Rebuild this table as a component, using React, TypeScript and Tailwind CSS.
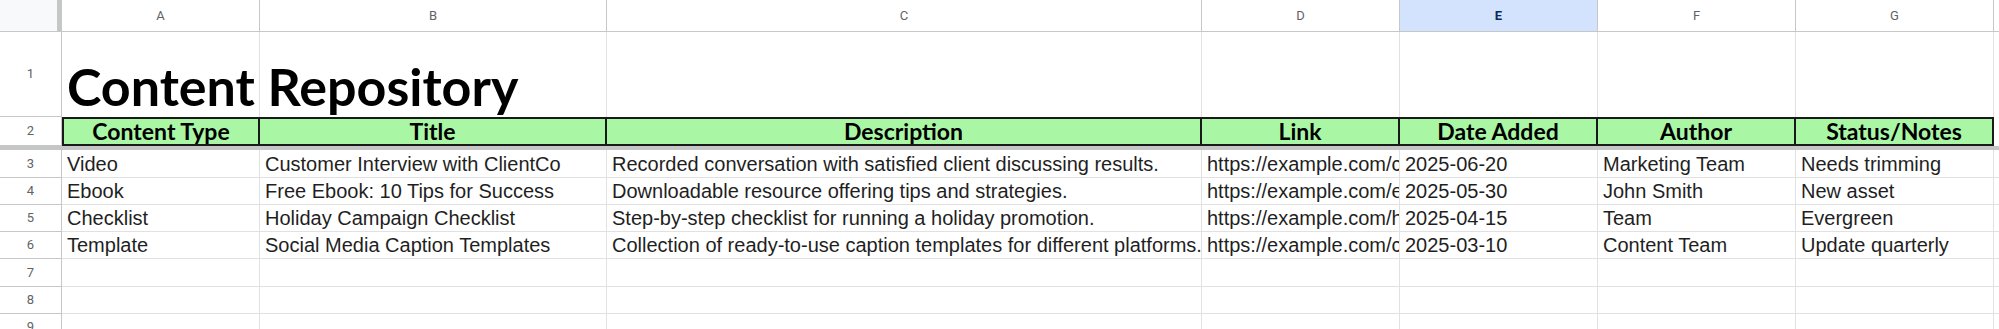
import React from 'react';

const cols = ['A', 'B', 'C', 'D', 'E', 'F', 'G'];
const widths = ['w-[198px]', 'w-[347px]', 'w-[595px]', 'w-[198px]', 'w-[198px]', 'w-[198px]', 'w-[198px]'];

const headers = ['Content Type', 'Title', 'Description', 'Link', 'Date Added', 'Author', 'Status/Notes'];

const rows = [
  ['Video', 'Customer Interview with ClientCo', 'Recorded conversation with satisfied client discussing results.', 'https://example.com/client-interview', '2025-06-20', 'Marketing Team', 'Needs trimming'],
  ['Ebook', 'Free Ebook: 10 Tips for Success', 'Downloadable resource offering tips and strategies.', 'https://example.com/ebook-tips', '2025-05-30', 'John Smith', 'New asset'],
  ['Checklist', 'Holiday Campaign Checklist', 'Step-by-step checklist for running a holiday promotion.', 'https://example.com/holiday-checklist', '2025-04-15', 'Team', 'Evergreen'],
  ['Template', 'Social Media Caption Templates', 'Collection of ready-to-use caption templates for different platforms.', 'https://example.com/caption-templates', '2025-03-10', 'Content Team', 'Update quarterly'],
];

const heights = ['h-[28px]', 'h-[27px]', 'h-[27px]', 'h-[27px]', 'h-[28px]', 'h-[27px]', 'h-[27px]'];

const RowNum = ({ n, h }: { n: number; h: string }) => (
  <div className={`${h} w-[62px] shrink-0 flex items-center justify-center border-r border-b border-[#c7c7c7] text-[13px] text-[#5f6368] font-['Roboto',sans-serif] bg-white`}>
    {n}
  </div>
);

export default function App() {
  return (
    <div className="w-[1999px] h-[329px] overflow-hidden bg-white font-['Liberation_Sans',Arial,sans-serif] text-[#1f1f1f]">
      {/* column letters */}
      <div className="flex h-[32px]">
        <div className="w-[62px] shrink-0 flex border-b border-[#c7c7c7] bg-[#f8f9fa]">
          <div className="flex-1" />
          <div className="w-[5px] bg-[#c4c7c5]" />
        </div>
        {cols.map((c, i) => (
          <div
            key={c}
            className={`${widths[i]} shrink-0 flex items-center justify-center border-r border-b border-[#c7c7c7] text-[13px] font-['Roboto',sans-serif] ${
              c === 'E' ? 'bg-[#d3e3fd] text-[#0b2a57] font-bold' : 'bg-white text-[#5f6368]'
            }`}
          >
            {c}
          </div>
        ))}
        <div className="flex-1 border-b border-[#c7c7c7] bg-white" />
      </div>

      {/* row 1: title */}
      <div className="flex h-[85px]">
        <RowNum n={1} h="h-[85px]" />
        <div className="relative w-[198px] shrink-0 flex items-end border-r border-[#e1e1e1] overflow-visible">
          <span className="relative z-10 pl-[5px] pb-[5px] whitespace-nowrap font-['Lato',sans-serif] font-bold text-[52px] leading-none text-black">
            Content Repository
          </span>
        </div>
        {widths.slice(1).map((w, i) => (
          <div key={i} className={`${w} shrink-0 border-r border-[#e1e1e1]`} />
        ))}
        <div className="flex-1" />
      </div>

      {/* row 2: headers */}
      <div className="flex h-[29px]">
        <RowNum n={2} h="h-[29px]" />
        {headers.map((h, i) => (
          <div
            key={h}
            className={`${widths[i]} shrink-0 flex items-center justify-center bg-[#a9f7a5] border-t-2 border-b-2 border-r-2 border-[#1a1a1a] ${
              i === 0 ? 'border-l-2' : ''
            } font-['Lato',sans-serif] font-bold text-[23px] leading-none text-black`}
          >
            {h}
          </div>
        ))}
        <div className="flex-1" />
      </div>

      {/* freeze bar */}
      <div className="h-[4px] bg-[#c4c7c5]" />

      {/* data rows */}
      {heights.map((h, r) => (
        <div key={r} className={`flex ${h}`}>
          <RowNum n={r + 3} h={h} />
          {widths.map((w, c) => (
            <div
              key={c}
              className={`${w} shrink-0 flex items-end overflow-hidden whitespace-nowrap border-r border-b border-[#e1e1e1] pl-[5px] pb-[3px] text-[20px] leading-none`}
            >
              {rows[r] ? rows[r][c] : ''}
            </div>
          ))}
          <div className="flex-1 border-b border-[#e1e1e1]" />
        </div>
      ))}
    </div>
  );
}
